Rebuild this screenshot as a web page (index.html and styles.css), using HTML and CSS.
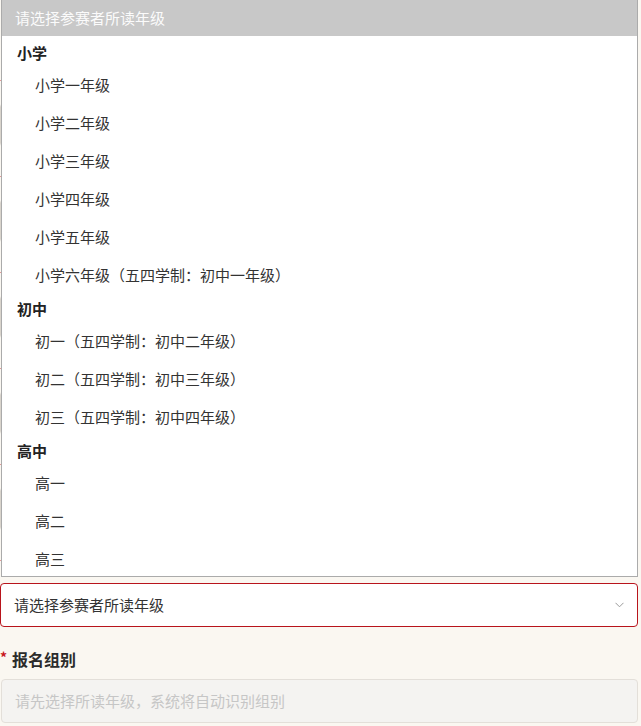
FILE: index.html
```html
<!DOCTYPE html>
<html lang="zh-CN">
<head>
<meta charset="utf-8">
<title>报名</title>
<link rel="stylesheet" href="styles.css">
</head>
<body>
<div class="page">
  <form class="form">
    <div class="field">
      <div class="label hidden-label"></div>
      <div class="input"></div>
    </div>
    <div class="field">
      <div class="label hidden-label"></div>
      <div class="input"></div>
    </div>
    <div class="field">
      <div class="label hidden-label"></div>
      <div class="input"></div>
    </div>
    <div class="field">
      <div class="label hidden-label"></div>
      <div class="input"></div>
    </div>
    <div class="field">
      <div class="label hidden-label"></div>
      <div class="input"></div>
    </div>
    <div class="field">
      <div class="label hidden-label"></div>
      <div class="select error">
        <span class="select-text">请选择参赛者所读年级</span>
        <svg class="chev" width="9" height="6" viewBox="0 0 9 6"><polyline points="0.5,0.8 4.5,4.8 8.5,0.8" fill="none" stroke="#9a9a9a" stroke-width="1"/></svg>
      </div>
    </div>
    <div class="field">
      <div class="label"><span class="req">*</span>报名组别</div>
      <div class="input disabled">请先选择所读年级，系统将自动识别组别</div>
    </div>
  </form>

  <div class="dropdown">
    <div class="dd-head">请选择参赛者所读年级</div>
    <div class="dd-group">小学</div>
    <div class="dd-opt">小学一年级</div>
    <div class="dd-opt">小学二年级</div>
    <div class="dd-opt">小学三年级</div>
    <div class="dd-opt">小学四年级</div>
    <div class="dd-opt">小学五年级</div>
    <div class="dd-opt">小学六年级（五四学制：初中一年级）</div>
    <div class="dd-group">初中</div>
    <div class="dd-opt">初一（五四学制：初中二年级）</div>
    <div class="dd-opt">初二（五四学制：初中三年级）</div>
    <div class="dd-opt">初三（五四学制：初中四年级）</div>
    <div class="dd-group">高中</div>
    <div class="dd-opt">高一</div>
    <div class="dd-opt">高二</div>
    <div class="dd-opt">高三</div>
  </div>
</div>
</body>
</html>
```

FILE: styles.css
```css
html, body {
  margin: 0;
  padding: 0;
}
body {
  background: #faf7f1;
  font-family: "Noto Sans CJK SC", "Noto Sans", sans-serif;
  color: #333;
  width: 641px;
  height: 726px;
  overflow: hidden;
}
.page {
  position: relative;
  width: 638px;
}
.form {
  display: flex;
  flex-direction: column;
  padding-top: 70px;
}
.field {
  display: flex;
  flex-direction: column;
  gap: 11px;
  margin-bottom: 19px;
}
.label {
  height: 22px;
  line-height: 22px;
  font-size: 16px;
  font-weight: 700;
  color: #2b2b2b;
  display: flex;
  align-items: center;
  padding-top: 2px;
  margin-bottom: -2px;
}
.hidden-label::before {
  content: "";
  display: block;
  width: 6px;
  height: 6px;
  margin-top: -4px;
  background: #c8161d;
  clip-path: polygon(50% 0, 62% 38%, 100% 38%, 70% 62%, 82% 100%, 50% 76%, 18% 100%, 30% 62%, 0 38%, 38% 38%);
}
.req {
  color: #c8161d;
  font-size: 14px;
  width: 12px;
  margin-top: -4px;
}
.input, .select {
  box-sizing: border-box;
  height: 44px;
  border: 1px solid #d9d4cc;
  border-radius: 4px;
  background: #fff;
  padding: 0 13px;
  font-size: 15px;
  line-height: 42px;
  color: #bbb;
}
.input.disabled {
  background: #f4f3f1;
  border-color: #e3dfd9;
  color: #c6c6c6;
  margin-left: 1px;
}
.select {
  display: flex;
  align-items: center;
  justify-content: space-between;
  color: #333;
}
.select.error {
  border-color: #b8141c;
}
.chev {
  margin-right: 0;
}
.dropdown {
  position: absolute;
  top: 0;
  left: 1px;
  width: 637px;
  box-sizing: border-box;
  background: #fff;
  border: 1px solid #ababab;
  border-top: none;
  font-size: 15px;
}
.dd-head {
  height: 36px;
  line-height: 36px;
  background: #c8c8c8;
  color: #fbfbfb;
  padding-left: 13px;
}
.dd-group {
  height: 28px;
  box-sizing: border-box;
  padding-top: 6px;
  line-height: 22px;
  padding-left: 15px;
  font-weight: 700;
  color: #222;
}
.dd-opt {
  height: 38px;
  box-sizing: border-box;
  padding-top: 4px;
  line-height: 33px;
  padding-left: 33px;
  color: #333;
}
```
